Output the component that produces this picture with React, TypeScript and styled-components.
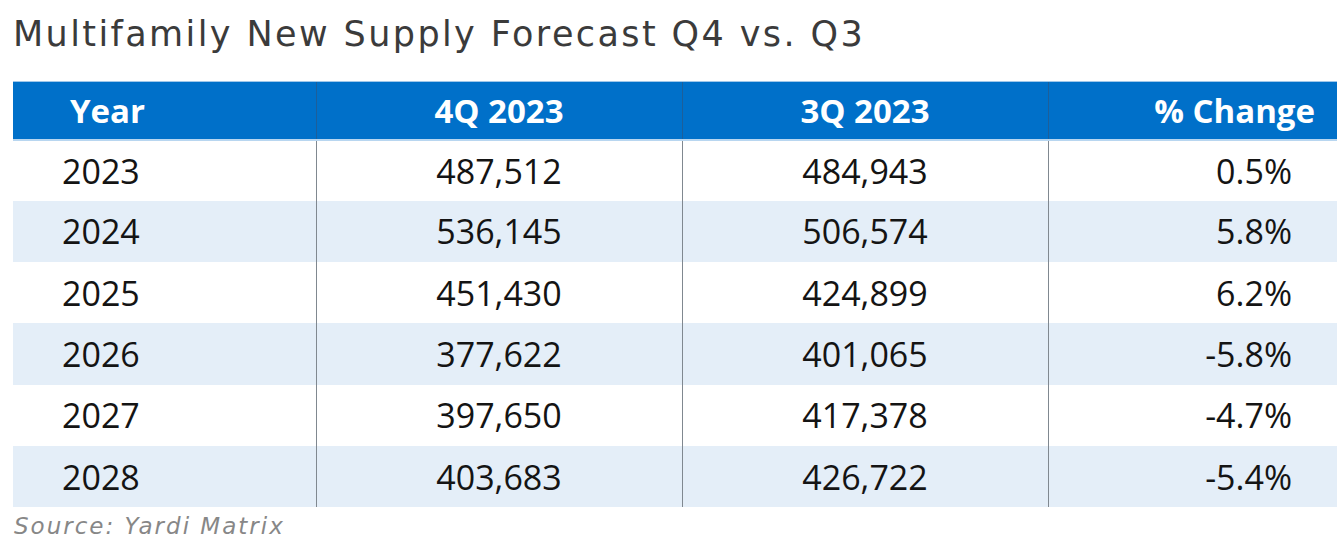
import styled, { createGlobalStyle } from "styled-components";

const GlobalStyle = createGlobalStyle`
  body {
    margin: 0;
    background: #ffffff;
    font-family: "Open Sans", "Liberation Sans", sans-serif;
  }
`;

const Page = styled.div`
  width: 1337px;
  height: 558px;
  overflow: hidden;
  display: flex;
  flex-direction: column;
`;

const Title = styled.h1`
  margin: 0;
  padding: 10px 0 0 13px;
  height: 81px;
  box-sizing: border-box;
  font-family: "DejaVu Sans", "Open Sans", sans-serif;
  font-size: 35px;
  font-weight: 400;
  letter-spacing: 2.4px;
  color: #3b3b3b;
  line-height: 48px;
`;

const Table = styled.table`
  margin-left: 13px;
  width: 1324px;
  border-collapse: collapse;
  table-layout: fixed;
`;

const HeadCell = styled.th<{ $align: string; $pad?: string }>`
  background: #0070c9;
  color: #ffffff;
  font-size: 33px;
  font-weight: 700;
  height: 58px;
  box-sizing: border-box;
  padding: 0 ${(p) => p.$pad ?? "0"};
  text-align: ${(p) => p.$align};
  border-top: 1px solid #9fc7ea;
  border-bottom: 2px solid #b8d6f0;
  border-left: 1px solid #1d5f9a;
  &:first-child {
    border-left: none;
  }
`;

const Row = styled.tr<{ $shaded: boolean }>`
  background: ${(p) => (p.$shaded ? "#e4eef8" : "#ffffff")};
`;

const Cell = styled.td<{ $align: string; $pad?: string }>`
  height: 61.3px;
  box-sizing: border-box;
  padding: 0 ${(p) => p.$pad ?? "0"};
  text-align: ${(p) => p.$align};
  font-size: 34px;
  color: #141414;
  border-left: 1px solid #808890;
  &:first-child {
    border-left: none;
  }
`;

const Source = styled.div`
  padding: 6px 0 0 14px;
  font-family: "DejaVu Sans", "Open Sans", sans-serif;
  font-size: 23px;
  font-style: italic;
  letter-spacing: 2px;
  color: #878787;
`;

const rows = [
  ["2023", "487,512", "484,943", "0.5%"],
  ["2024", "536,145", "506,574", "5.8%"],
  ["2025", "451,430", "424,899", "6.2%"],
  ["2026", "377,622", "401,065", "-5.8%"],
  ["2027", "397,650", "417,378", "-4.7%"],
  ["2028", "403,683", "426,722", "-5.4%"],
];

export default function App() {
  return (
    <Page>
      <GlobalStyle />
      <Title>Multifamily New Supply Forecast Q4 vs. Q3</Title>
      <Table>
        <colgroup>
          <col style={{ width: 303 }} />
          <col style={{ width: 366 }} />
          <col style={{ width: 366 }} />
          <col style={{ width: 289 }} />
        </colgroup>
        <thead>
          <tr>
            <HeadCell $align="left" $pad="57px">Year</HeadCell>
            <HeadCell $align="center">4Q 2023</HeadCell>
            <HeadCell $align="center">3Q 2023</HeadCell>
            <HeadCell $align="right" $pad="22px">% Change</HeadCell>
          </tr>
        </thead>
        <tbody>
          {rows.map((r, i) => (
            <Row key={r[0]} $shaded={i % 2 === 1}>
              <Cell $align="left" $pad="49px">{r[0]}</Cell>
              <Cell $align="center">{r[1]}</Cell>
              <Cell $align="center">{r[2]}</Cell>
              <Cell $align="right" $pad="45px">{r[3]}</Cell>
            </Row>
          ))}
        </tbody>
      </Table>
      <Source>Source: Yardi Matrix</Source>
    </Page>
  );
}
